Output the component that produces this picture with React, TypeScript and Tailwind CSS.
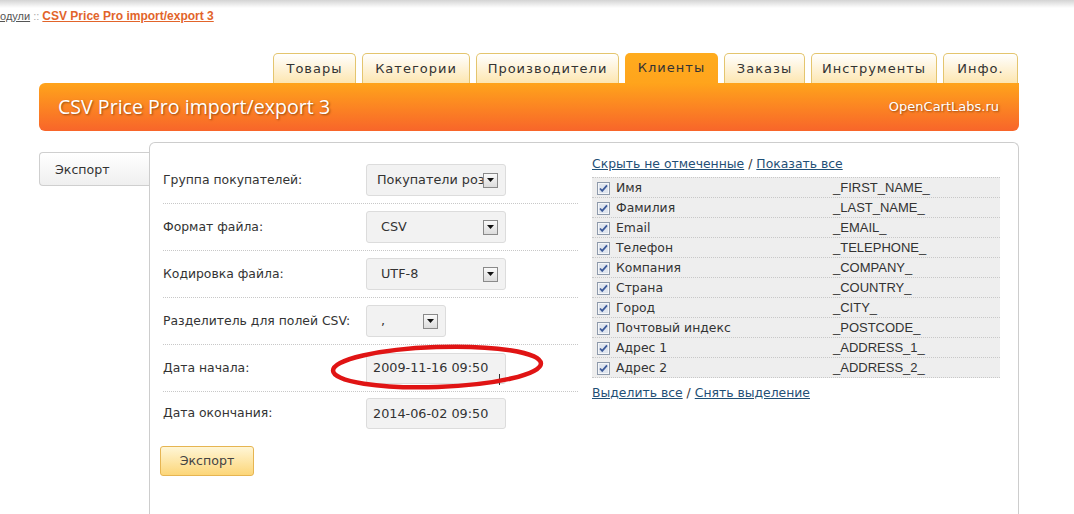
import React from "react";

const tabs = [
  { label: "Товары", w: "w-[83px]" },
  { label: "Категории", w: "w-[108px]" },
  { label: "Производители", w: "w-[143px]" },
  { label: "Клиенты", w: "w-[93px]", active: true },
  { label: "Заказы", w: "w-[81px]" },
  { label: "Инструменты", w: "w-[126px]" },
  { label: "Инфо.", w: "w-[75px]" },
];

const fields = [
  ["Имя", "_FIRST_NAME_"],
  ["Фамилия", "_LAST_NAME_"],
  ["Email", "_EMAIL_"],
  ["Телефон", "_TELEPHONE_"],
  ["Компания", "_COMPANY_"],
  ["Страна", "_COUNTRY_"],
  ["Город", "_CITY_"],
  ["Почтовый индекс", "_POSTCODE_"],
  ["Адрес 1", "_ADDRESS_1_"],
  ["Адрес 2", "_ADDRESS_2_"],
];

function Arrow() {
  return (
    <span className="flex h-[15px] w-[15px] shrink-0 items-center justify-center border border-[#8a8a8a] bg-[linear-gradient(to_bottom,#fafafa,#dcdcdc)]">
      <svg width="7" height="4" viewBox="0 0 7 4">
        <path d="M0 0h7L3.5 4z" fill="#111" />
      </svg>
    </span>
  );
}

function Select({ value, className, pad = "pl-[14px]" }: { value: string; className?: string; pad?: string }) {
  return (
    <div
      className={`flex h-[32px] items-center overflow-hidden rounded-[3px] border border-[#dcdcdc] bg-[#f2f2f2] ${pad} pr-[7px] text-[12.8px] ${className ?? "w-[140px]"}`}
    >
      <span className="flex-1 overflow-hidden whitespace-nowrap">{value}</span>
      <Arrow />
    </div>
  );
}

function DateInput({ value, cursor }: { value: string; cursor?: boolean }) {
  return (
    <div className="relative flex h-[31px] w-[140px] items-center rounded-[3px] border border-[#dcdcdc] bg-[#f2f2f2] pl-[6px] text-[12.8px]">
      {value}
      {cursor && <span className="absolute left-[132px] top-[20px] h-[11px] w-px bg-[#333]" />}
    </div>
  );
}

function Check() {
  return (
    <svg width="13" height="13" viewBox="0 0 13 13" className="shrink-0">
      <rect x="0.5" y="0.5" width="12" height="12" fill="#f4f6f9" stroke="#8e9aab" />
      <rect x="2" y="2" width="9" height="9" fill="#dfe5ee" />
      <path d="M3 6.5l2.2 2.3L10 3.4" fill="none" stroke="#3c5a9a" strokeWidth="1.8" />
    </svg>
  );
}

export default function App() {
  const rows: [string, React.ReactNode][] = [
    ["Группа покупателей:", <Select value="Покупатели розница" pad="pl-[10px]" />],
    ["Формат файла:", <Select value="CSV" />],
    ["Кодировка файла:", <Select value="UTF-8" />],
    ["Разделитель для полей CSV:", <Select value="," className="w-[80px]" />],
    ["Дата начала:", <DateInput value="2009-11-16 09:50" cursor />],
    ["Дата окончания:", <DateInput value="2014-06-02 09:50" />],
  ];

  return (
    <div className="relative h-[514px] w-[1074px] overflow-hidden bg-white font-['DejaVu_Sans',sans-serif] text-[12.4px] text-[#333]">
      <div className="h-[8px] bg-[linear-gradient(to_bottom,#d4d4d4,#ffffff)]" />

      {/* Breadcrumb */}
      <div className="h-[16px] whitespace-nowrap font-['Liberation_Sans',sans-serif] text-[12px] leading-[16px]">
        <span className="text-[11px] text-[#555] underline">одули</span>
        <span className="text-[11px] text-[#aaa]"> :: </span>
        <span className="font-bold text-[#e2642a] underline">CSV Price Pro import/export 3</span>
      </div>

      {/* Tabs */}
      <div className="ml-[273px] mt-[29px] flex h-[30px] gap-[6px]">
        {tabs.map((t) => (
          <div
            key={t.label}
            className={`flex items-center justify-center rounded-t-[5px] text-[13px] tracking-[1px] ${t.w} ${
              t.active
                ? "bg-[linear-gradient(to_bottom,#ffac1e,#ffa41c)]"
                : "border border-b-0 border-[#e4c56e] bg-[linear-gradient(to_bottom,#ffffff,#fde6b0)]"
            }`}
          >
            {t.label}
          </div>
        ))}
      </div>

      {/* Header */}
      <div className="ml-[39px] flex h-[48px] w-[980px] items-center justify-between rounded-b-[6px] rounded-tl-[6px] bg-[linear-gradient(to_bottom,#ffa41b,#f8652a)] pl-[19px] pr-[20px] text-white [text-shadow:1px_1px_2px_rgba(90,40,0,0.6)]">
        <span className="font-['Open_Sans',sans-serif] text-[19.6px]">CSV Price Pro import/export 3</span>
        <span className="text-[13px]">OpenCartLabs.ru</span>
      </div>

      {/* Body */}
      <div className="ml-[39px] mt-[11px] flex">
        <div className="w-[110px] pt-[10px]">
          <div className="flex h-[34px] items-center rounded-l-[4px] border border-r-0 border-[#cfcfcf] bg-[linear-gradient(to_bottom,#ffffff,#efefef)] pl-[15px] pt-[2px] text-[12.6px]">
            Экспорт
          </div>
        </div>

        <div className="flex h-[400px] w-[870px] rounded-t-[6px] border border-b-0 border-[#cdcdcd]">
          {/* Form */}
          <div className="ml-[13px] w-[415px] pt-[14px]">
            {rows.map(([label, ctrl], i) => (
              <div
                key={label}
                className={`flex items-center ${
                  i < rows.length - 1 ? "h-[47px] border-b border-dotted border-[#c8c8c8]" : "h-[43px]"
                }`}
              >
                <span className="w-[203px]">{label}</span>
                {ctrl}
              </div>
            ))}
            <button className="-ml-[3px] mt-[11px] h-[30px] w-[94px] rounded-[3px] border border-[#e6b552] bg-[linear-gradient(to_bottom,#fff6d6,#fcd679)] text-[12.6px] text-[#444]">
              Экспорт
            </button>
          </div>

          {/* Fields */}
          <div className="ml-[14px] w-[408px] pt-[13px]">
            <div className="mb-[5px] h-[16px] leading-[16px]">
              <span className="text-[#1f4f76] underline">Скрыть не отмеченные</span> /{" "}
              <span className="text-[#1f4f76] underline">Показать все</span>
            </div>
            <div className="border-t border-dotted border-[#c8c8c8] bg-[#eeeeee]">
              {fields.map(([name, code]) => (
                <div
                  key={code}
                  className="flex h-[20px] items-center border-b border-dotted border-[#c8c8c8] pl-[5px] pt-px"
                >
                  <Check />
                  <span className="ml-[6px] w-[217px]">{name}</span>
                  <span className="font-['Liberation_Sans',sans-serif] text-[13px]">{code}</span>
                </div>
              ))}
            </div>
            <div className="mt-[7px] h-[16px] leading-[16px]">
              <span className="text-[#1f4f76] underline">Выделить все</span> /{" "}
              <span className="text-[#1f4f76] underline">Снять выделение</span>
            </div>
          </div>
        </div>
      </div>

      {/* Red marker ellipse */}
      <svg className="absolute left-[328px] top-[342px]" width="218" height="52" viewBox="0 0 218 52">
        <ellipse cx="109" cy="25" rx="104" ry="20" transform="rotate(-2 109 25)" fill="none" stroke="#e01414" strokeWidth="4.5" />
      </svg>
    </div>
  );
}
